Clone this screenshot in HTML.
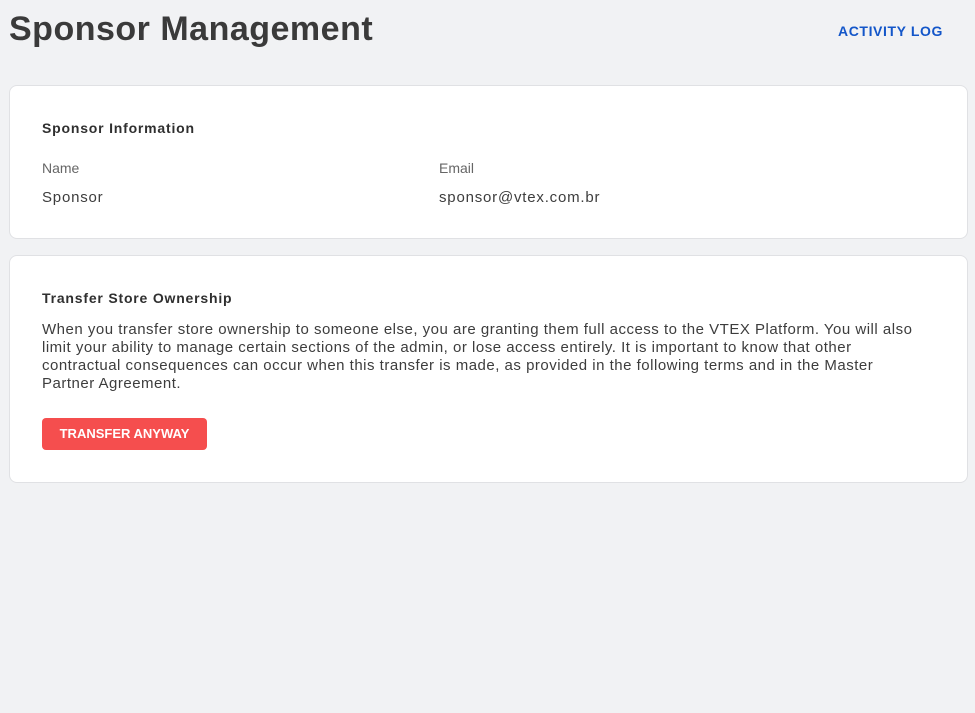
<!DOCTYPE html>
<html><head><meta charset="utf-8"><style>
body{margin:0;background:#f1f2f4;font-family:"Liberation Sans",sans-serif;color:#3d3d3d;width:975px;height:713px;overflow:hidden;position:relative}
h1{position:absolute;left:9px;top:10px;margin:0;font-size:34px;font-weight:bold;color:#3a3a3a;letter-spacing:0.5px}
.log{position:absolute;left:838px;top:23px;font-size:14px;font-weight:bold;color:#1356c9;letter-spacing:0.6px}
.card{position:absolute;left:9px;width:959px;background:#fff;border:1px solid #e0e1e4;border-radius:8px;box-sizing:border-box}
.t{position:absolute;left:32px;font-size:14px;font-weight:bold;color:#2f2f2f;letter-spacing:0.8px}
.l{position:absolute;font-size:14px;color:#666}
.v{position:absolute;font-size:15px;color:#3d3d3d;letter-spacing:0.8px}
p{position:absolute;left:32px;top:65px;margin:0;width:910px;font-size:15px;line-height:18px;color:#3d3d3d;letter-spacing:0.5px;white-space:nowrap}
.btn{position:absolute;left:32px;top:162px;width:165px;height:32px;background:#f54e4e;border-radius:4px;color:#fff;font-size:13px;font-weight:bold;text-align:center;line-height:32px}
</style></head><body>
<h1>Sponsor Management</h1>
<div class="log">ACTIVITY LOG</div>
<div class="card" style="top:85px;height:154px">
<div class="t" style="top:34px">Sponsor Information</div>
<div class="l" style="left:32px;top:74px">Name</div>
<div class="l" style="left:429px;top:74px">Email</div>
<div class="v" style="left:32px;top:103px">Sponsor</div>
<div class="v" style="left:429px;top:103px">sponsor@vtex.com.br</div>
</div>
<div class="card" style="top:255px;height:228px">
<div class="t" style="top:34px">Transfer Store Ownership</div>
<p>When you transfer store ownership to someone else, you are granting them full access to the VTEX Platform. You will also<br>limit your ability to manage certain sections of the admin, or lose access entirely. It is important to know that other<br>contractual consequences can occur when this transfer is made, as provided in the following terms and in the Master<br>Partner Agreement.</p>
<div class="btn">TRANSFER ANYWAY</div>
</div>
</body></html>
